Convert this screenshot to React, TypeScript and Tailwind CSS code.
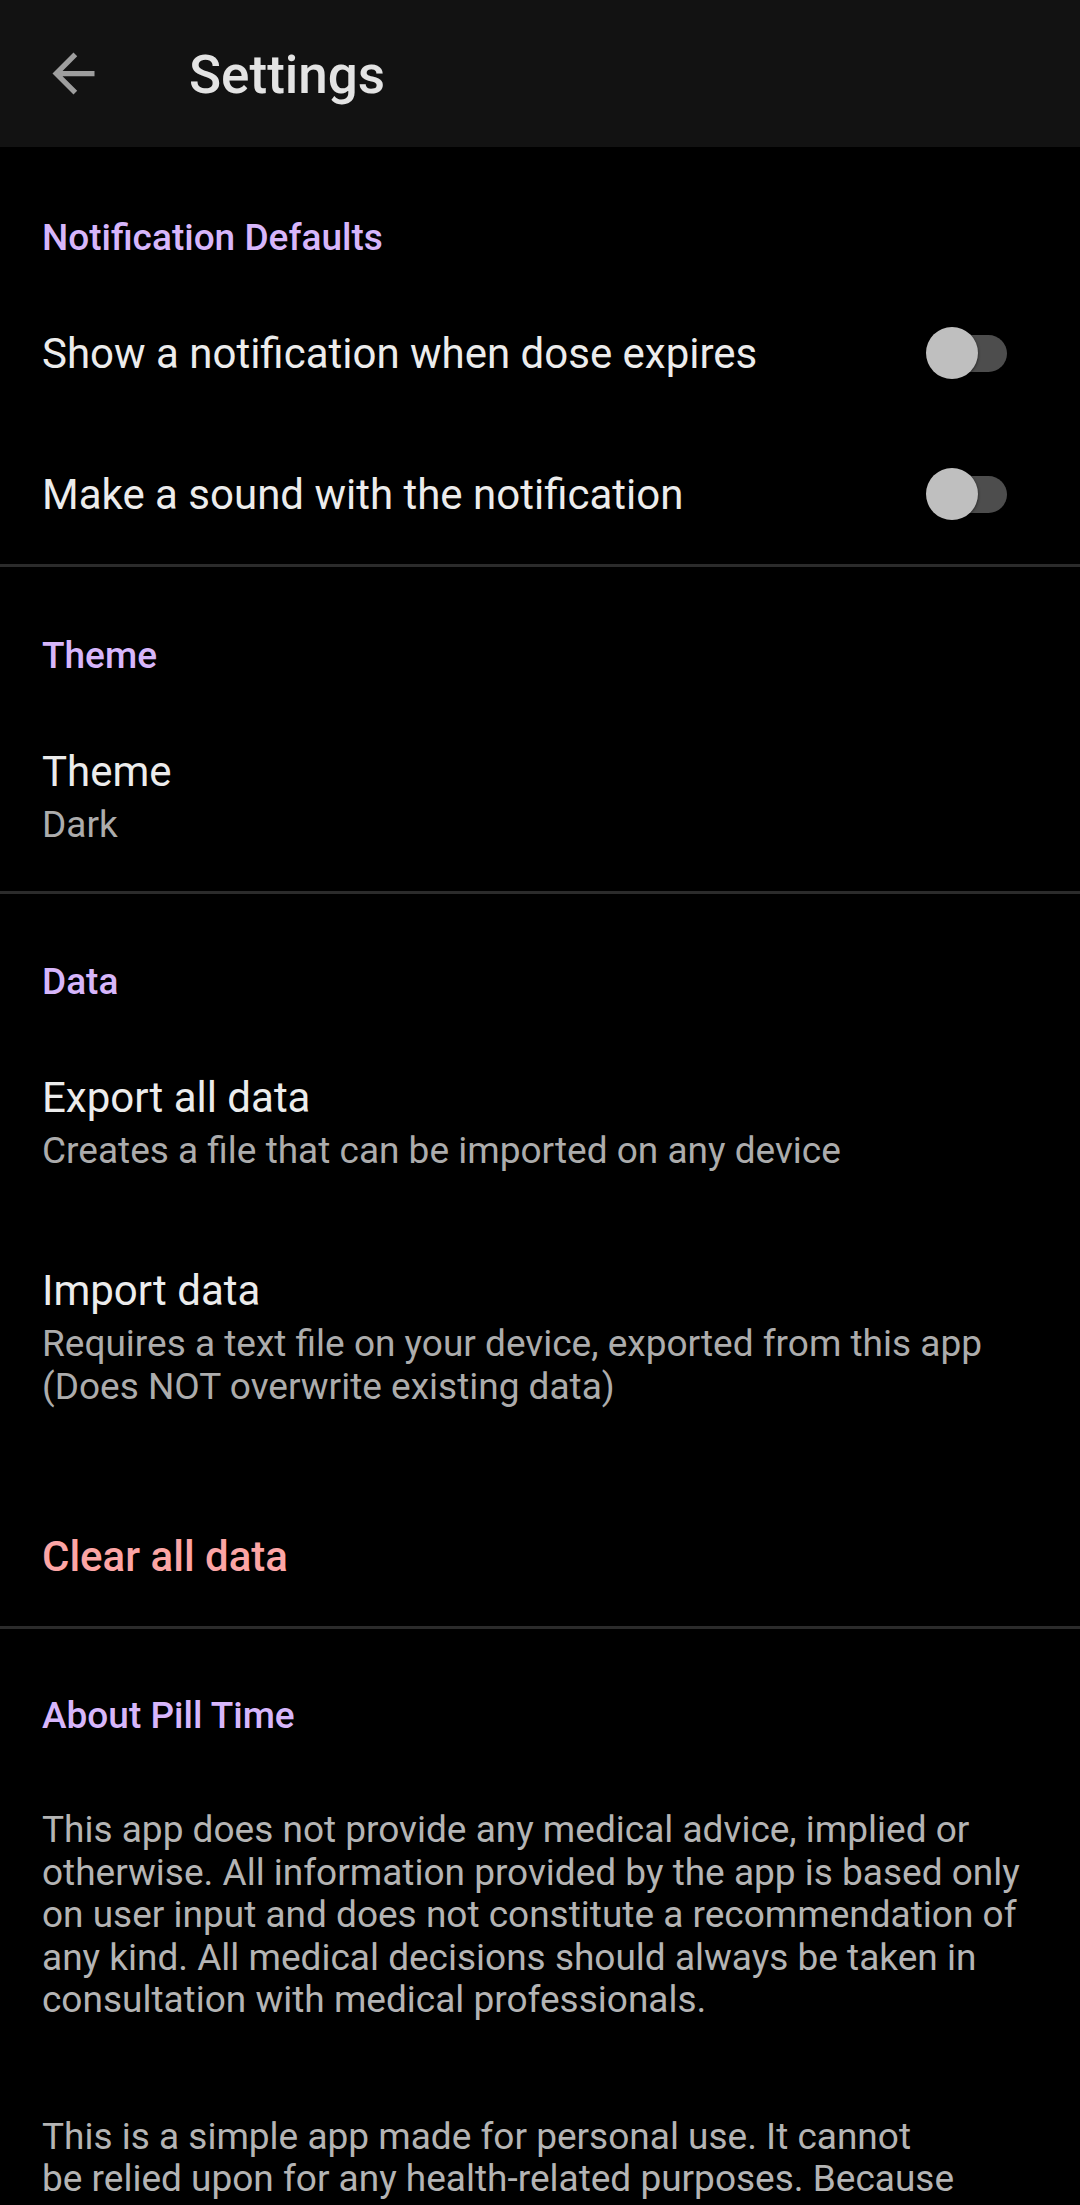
import React from "react";

const font = { fontFamily: "Roboto, 'Noto Sans', sans-serif" };

function Toggle() {
  return (
    <div className="relative w-[82px] h-[52px] mr-[73px] shrink-0">
      <div className="absolute left-[6px] right-0 top-[7.5px] h-[37px] rounded-full bg-[#4d4d4d]" />
      <div className="absolute left-[1px] top-0 w-[52px] h-[52px] rounded-full bg-[#bfbfbf] shadow-[0_1px_3px_rgba(0,0,0,0.6)]" />
    </div>
  );
}

function Category({ children, pt }: { children: React.ReactNode; pt: string }) {
  return (
    <div className={`${pt} pl-[42px] text-[37px] leading-[42px] font-medium text-[#d7b6fb]`}>{children}</div>
  );
}

function Divider() {
  return <div className="h-[3px] bg-[#2b2b2b]" />;
}

export default function App() {
  return (
    <div className="w-[1080px] h-[2205px] overflow-hidden bg-black" style={font}>
      {/* Header */}
      <div className="h-[147px] bg-[#121212] flex items-center pt-[3px]">
        <div className="ml-[42px] w-[63px] h-[63px] -mt-[3px] flex items-center justify-center">
          <svg viewBox="0 0 24 24" width="63" height="63" fill="#9e9e9e">
            <path d="M20 11H7.83l5.59-5.59L12 4l-8 8 8 8 1.41-1.41L7.83 13H20v-2z" />
          </svg>
        </div>
        <div className="ml-[84px] text-[53px] leading-[64px] font-medium text-[#e3e3e3]">Settings</div>
      </div>

      {/* Notification Defaults */}
      <Category pt="pt-[70px]">Notification Defaults</Category>
      <div className="mt-[23px] h-[142px] flex items-center justify-between pl-[42px]">
        <div className="text-[42px] leading-[49px] text-[#ececec]">Show a notification when dose expires</div>
        <Toggle />
      </div>
      <div className="h-[140px] flex items-center justify-between pl-[42px]">
        <div className="text-[42px] leading-[49px] text-[#ececec]">Make a sound with the notification</div>
        <Toggle />
      </div>
      <Divider />

      {/* Theme */}
      <Category pt="pt-[68px]">Theme</Category>
      <div className="pl-[42px] pt-[70px] pb-[45px]">
        <div className="text-[42px] leading-[49px] text-[#ececec]">Theme</div>
        <div className="mt-[7px] text-[37px] leading-[43px] text-[#acacac]">Dark</div>
      </div>
      <Divider />

      {/* Data */}
      <Category pt="pt-[67px]">Data</Category>
      <div className="pl-[42px] pt-[70px]">
        <div className="text-[42px] leading-[49px] text-[#ececec]">Export all data</div>
        <div className="mt-[7px] text-[37px] leading-[43px] text-[#acacac]">Creates a file that can be imported on any device</div>
      </div>
      <div className="pl-[42px] pt-[94px]">
        <div className="text-[42px] leading-[49px] text-[#ececec]">Import data</div>
        <div className="mt-[8px] text-[37px] leading-[42.5px] text-[#acacac]">
          Requires a text file on your device, exported from this app
          <br />
          (Does NOT overwrite existing data)
        </div>
      </div>
      <div className="pl-[42px] pt-[124px] pb-[45px]">
        <div className="text-[42px] leading-[49px] font-medium text-[#fca5a5]">Clear all data</div>
      </div>
      <Divider />

      {/* About */}
      <Category pt="pt-[66px]">About Pill Time</Category>
      <div className="pl-[42px] pr-[40px] mt-[72px] text-[37px] leading-[42.5px] text-[#b4b4b4]">
        This app does not provide any medical advice, implied or
        <br />
        otherwise. All information provided by the app is based only
        <br />
        on user input and does not constitute a recommendation of
        <br />
        any kind. All medical decisions should always be taken in
        <br />
        consultation with medical professionals.
      </div>
      <div className="pl-[42px] pr-[40px] mt-[94px] text-[37px] leading-[42.5px] text-[#b4b4b4]">
        This is a simple app made for personal use. It cannot
        <br />
        be relied upon for any health-related purposes. Because
      </div>
    </div>
  );
}
